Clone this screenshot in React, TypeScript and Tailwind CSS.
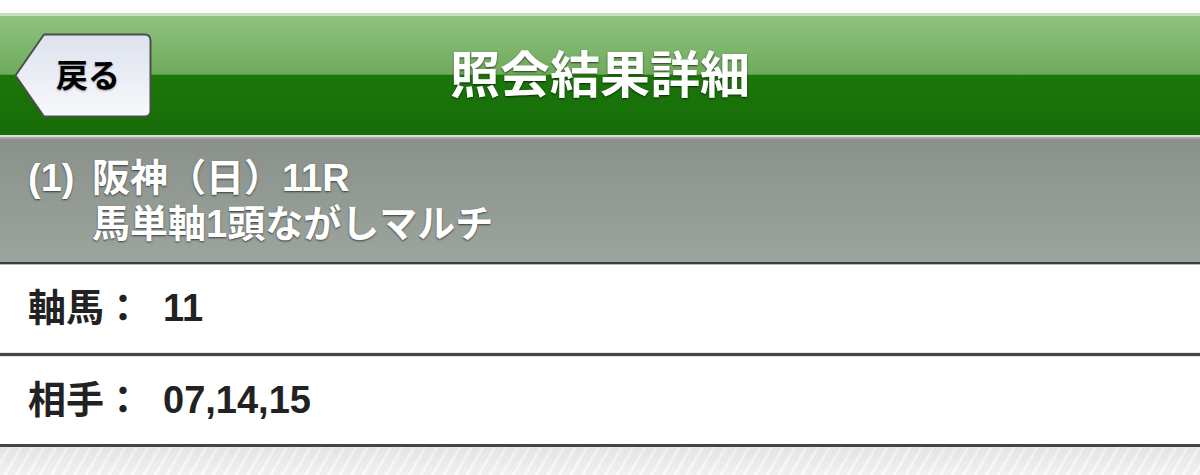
import React from 'react';

const BackButton: React.FC = () => (
    <button className="relative w-[138px] h-[85px] ml-[14px] flex items-center justify-center pl-[10px]">
        <svg className="absolute inset-0" width="138" height="85" viewBox="0 0 138 85">
            <defs>
                <linearGradient id="backFill" x1="0" y1="0" x2="0" y2="1">
                    <stop offset="0%" stopColor="#dde2ee" />
                    <stop offset="100%" stopColor="#f8f9fc" />
                </linearGradient>
            </defs>
            <path
                d="M1.5 42.5 L30 1.5 H130.5 Q136.5 1.5 136.5 7.5 V77.5 Q136.5 83.5 130.5 83.5 H30 Z"
                fill="url(#backFill)"
                stroke="#4b4f4b"
                strokeWidth="2"
                strokeLinejoin="round"
            />
        </svg>
        <span className="relative text-[32px] font-bold text-black leading-none [text-shadow:0_1px_2px_rgba(0,0,0,0.4)]">
            戻る
        </span>
    </button>
);

const Row: React.FC<{ label: string; value: string }> = ({ label, value }) => (
    <div className="h-[87px] flex items-center pl-[28px] text-[38px] font-bold text-[#222222] bg-white">
        <span>{label}</span>
        <span className="ml-[21px]">{value}</span>
    </div>
);

const Divider: React.FC = () => (
    <div className="flex flex-col">
        <div className="h-px bg-[#e6e6e6]" />
        <div className="h-[3px] bg-[#454545]" />
        <div className="h-px bg-[#e2e2e2]" />
    </div>
);

export default function App() {
    return (
        <div className="w-[1200px] h-[475px] overflow-hidden bg-white flex flex-col font-['Liberation_Sans','Noto_Sans_CJK_JP',sans-serif]">
            <div className="h-[13px] shrink-0 bg-white" />

            <header className="h-[122px] shrink-0 flex flex-col">
                <div className="h-[3px] bg-[#c5e0b9]" />
                <div className="flex-1 grid grid-cols-[1fr_auto_1fr] items-center bg-[linear-gradient(to_bottom,#8fc27f_0%,#6fab5c_49%,#1c770b_49.5%,#166c07_100%)]">
                    <div className="flex items-center">
                        <BackButton />
                    </div>
                    <h1 className="text-[50px] font-bold text-white leading-none [text-shadow:0_1px_2px_rgba(0,0,0,0.65)]">
                        照会結果詳細
                    </h1>
                    <div />
                </div>
            </header>

            <div className="h-[2px] shrink-0 bg-[#dadedb]" />
            <div className="h-[2px] shrink-0 bg-[#a3aaa4]" />

            <section className="h-[123px] shrink-0 flex items-center pl-[28px] text-[38px] font-bold text-white leading-[46px] bg-[linear-gradient(to_bottom,#8a918b,#9ba49d)] [text-shadow:0_1px_2px_rgba(0,0,0,0.6)]">
                <div className="flex">
                    <span className="w-[64px] shrink-0">(1)</span>
                    <div className="flex flex-col">
                        <span>阪神（日）11R</span>
                        <span>馬単軸1頭ながしマルチ</span>
                    </div>
                </div>
            </section>

            <div className="h-[2px] shrink-0 bg-[#3c3f3c]" />
            <div className="h-px shrink-0 bg-[#b6bbb7]" />

            <Row label="軸馬：" value="11" />
            <Divider />
            <Row label="相手：" value="07,14,15" />

            <div className="h-[3px] shrink-0 bg-[#444444]" />
            <div className="flex-1 bg-[linear-gradient(to_bottom,rgba(0,0,0,0.05),rgba(0,0,0,0)),repeating-linear-gradient(120deg,#f0f0f0_0px,#f0f0f0_7px,#fafafa_7px,#fafafa_10px)]" />
        </div>
    );
}
